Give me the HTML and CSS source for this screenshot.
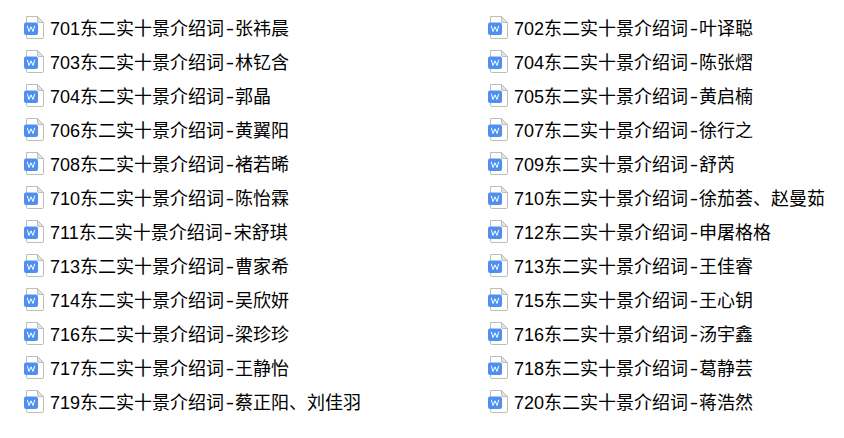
FILE: index.html
```html
<!DOCTYPE html>
<html lang="zh-CN">

<head>
    <meta charset="UTF-8">
    <meta name="viewport" content="width=device-width, initial-scale=1.0">
    <title>东二实十景介绍词</title>
    <link rel="stylesheet" href="styles.css">
</head>

<body>
    <svg class="sprite" width="0" height="0">
        <symbol id="doc" viewBox="0 0 20 23">
            <path d="M2.500 .500H13.500L19.500 6.500V21A1.500 1.500 0 0 1 18 22.500H4A1.500 1.500 0 0 1 2.500 21Z" fill="#fff" stroke="#bdbdbd" />
            <path d="M13.500 .500V5A1.500 1.500 0 0 0 15 6.500H19.500Z" fill="#e4e4e4" stroke="#bdbdbd" />
            <rect x="0" y="6.500" width="14" height="12.500" rx="2" fill="#4e8ff0" />
            <path d="M3.300 9.800L5 15.500L7 10.800L9 15.500L10.700 9.800" fill="none" stroke="#fff" stroke-width="1" />
        </symbol>
    </svg>
    <ul class="files">
        <li><svg class="icon"><use href="#doc" /></svg><span>701东二实十景介绍词<i>-</i>张祎晨</span></li>
        <li><svg class="icon"><use href="#doc" /></svg><span>702东二实十景介绍词<i>-</i>叶译聪</span></li>
        <li><svg class="icon"><use href="#doc" /></svg><span>703东二实十景介绍词<i>-</i>林钇含</span></li>
        <li><svg class="icon"><use href="#doc" /></svg><span>704东二实十景介绍词<i>-</i>陈张熠</span></li>
        <li><svg class="icon"><use href="#doc" /></svg><span>704东二实十景介绍词<i>-</i>郭晶</span></li>
        <li><svg class="icon"><use href="#doc" /></svg><span>705东二实十景介绍词<i>-</i>黄启楠</span></li>
        <li><svg class="icon"><use href="#doc" /></svg><span>706东二实十景介绍词<i>-</i>黄翼阳</span></li>
        <li><svg class="icon"><use href="#doc" /></svg><span>707东二实十景介绍词<i>-</i>徐行之</span></li>
        <li><svg class="icon"><use href="#doc" /></svg><span>708东二实十景介绍词<i>-</i>褚若晞</span></li>
        <li><svg class="icon"><use href="#doc" /></svg><span>709东二实十景介绍词<i>-</i>舒芮</span></li>
        <li><svg class="icon"><use href="#doc" /></svg><span>710东二实十景介绍词<i>-</i>陈怡霖</span></li>
        <li><svg class="icon"><use href="#doc" /></svg><span>710东二实十景介绍词<i>-</i>徐茄荟、赵曼茹</span></li>
        <li><svg class="icon"><use href="#doc" /></svg><span>711东二实十景介绍词<i>-</i>宋舒琪</span></li>
        <li><svg class="icon"><use href="#doc" /></svg><span>712东二实十景介绍词<i>-</i>申屠格格</span></li>
        <li><svg class="icon"><use href="#doc" /></svg><span>713东二实十景介绍词<i>-</i>曹家希</span></li>
        <li><svg class="icon"><use href="#doc" /></svg><span>713东二实十景介绍词<i>-</i>王佳睿</span></li>
        <li><svg class="icon"><use href="#doc" /></svg><span>714东二实十景介绍词<i>-</i>吴欣妍</span></li>
        <li><svg class="icon"><use href="#doc" /></svg><span>715东二实十景介绍词<i>-</i>王心钥</span></li>
        <li><svg class="icon"><use href="#doc" /></svg><span>716东二实十景介绍词<i>-</i>梁珍珍</span></li>
        <li><svg class="icon"><use href="#doc" /></svg><span>716东二实十景介绍词<i>-</i>汤宇鑫</span></li>
        <li><svg class="icon"><use href="#doc" /></svg><span>717东二实十景介绍词<i>-</i>王静怡</span></li>
        <li><svg class="icon"><use href="#doc" /></svg><span>718东二实十景介绍词<i>-</i>葛静芸</span></li>
        <li><svg class="icon"><use href="#doc" /></svg><span>719东二实十景介绍词<i>-</i>蔡正阳、刘佳羽</span></li>
        <li><svg class="icon"><use href="#doc" /></svg><span>720东二实十景介绍词<i>-</i>蒋浩然</span></li>
    </ul>
</body>

</html>
```
FILE: styles.css
```css
body {
    margin: 0;
    background-color: #fff;
    color: #000;
    font-family: "Liberation Sans", "Noto Sans CJK SC", sans-serif;
    font-size: 18px;
}

.sprite {
    display: block;
}

.files {
    display: grid;
    grid-template-columns: 464px 1fr;
    grid-auto-rows: 34px;
    margin: 0;
    padding: 10px 0 0 24px;
    list-style: none;
}

.files li {
    display: flex;
    align-items: center;
    gap: 6px;
    white-space: nowrap;
}

/* the dash is longer in the original than in this font */
.files i {
    display: inline-block;
    margin: 0 2.5px;
    font-style: normal;
    transform: scaleX(1.4);
}

.icon {
    width: 20px;
    height: 23px;
    flex-shrink: 0;
}
```
